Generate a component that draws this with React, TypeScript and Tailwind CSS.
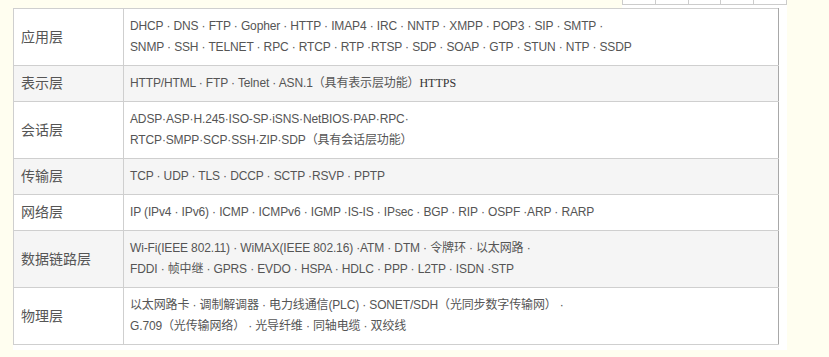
const rows: { label: string; lines: React.ReactNode[] }[] = [
  {
    label: "应用层",
    lines: [
      "DHCP · DNS · FTP · Gopher · HTTP · IMAP4 · IRC · NNTP · XMPP · POP3 · SIP · SMTP ·",
      "SNMP · SSH · TELNET · RPC · RTCP · RTP ·RTSP · SDP · SOAP · GTP · STUN · NTP · SSDP",
    ],
  },
  {
    label: "表示层",
    lines: [
      <>
        HTTP/HTML · FTP · Telnet · ASN.1（具有表示层功能）
        <span className="font-['Liberation_Serif','Noto_Sans_CJK_SC',serif] text-[#333] tracking-normal">HTTPS</span>
      </>,
    ],
  },
  {
    label: "会话层",
    lines: [
      "ADSP·ASP·H.245·ISO-SP·iSNS·NetBIOS·PAP·RPC·",
      "RTCP·SMPP·SCP·SSH·ZIP·SDP（具有会话层功能）",
    ],
  },
  {
    label: "传输层",
    lines: ["TCP · UDP · TLS · DCCP · SCTP ·RSVP · PPTP"],
  },
  {
    label: "网络层",
    lines: ["IP (IPv4 · IPv6) · ICMP · ICMPv6 · IGMP ·IS-IS · IPsec · BGP · RIP · OSPF ·ARP · RARP"],
  },
  {
    label: "数据链路层",
    lines: [
      "Wi-Fi(IEEE 802.11) · WiMAX(IEEE 802.16) ·ATM · DTM · 令牌环 · 以太网路 ·",
      "FDDI · 帧中继 · GPRS · EVDO · HSPA · HDLC · PPP · L2TP · ISDN ·STP",
    ],
  },
  {
    label: "物理层",
    lines: [
      "以太网路卡 · 调制解调器 · 电力线通信(PLC) · SONET/SDH（光同步数字传输网） ·",
      "G.709（光传输网络） · 光导纤维 · 同轴电缆 · 双绞线",
    ],
  },
];

export default function App() {
  return (
    <div className="w-[829px] h-[357px] overflow-hidden bg-[#fffef0] font-['Liberation_Sans','Noto_Sans_CJK_SC',sans-serif]">
      <div className="ml-[13px] w-[774px] flex flex-col">
        {/* bottom of the previous table */}
        <div className="h-[8px] flex justify-end">
          <div className="w-[165px] bg-white">
            <div className="h-[5px] flex border-l border-b border-[#ccc]">
              {[0, 1, 2, 3, 4].map(i => (
                <div key={i} className="flex-1 border-r border-[#ccc]" />
              ))}
            </div>
          </div>
        </div>

        <div className="flex">
          <table className="w-[766px] border-collapse bg-white">
            <tbody>
              {rows.map((row, i) => (
                <tr key={row.label} className={i % 2 === 1 ? "bg-[#f5f5f5]" : "bg-white"}>
                  <td className="w-[110px] border border-[#cfcfcf] px-[7px] pb-[2px] align-middle text-[14px] text-[#555] font-['Noto_Sans_CJK_SC',sans-serif]">
                    {row.label}
                  </td>
                  <td className="border border-[#cfcfcf] border-r-[#a8a8a8] pl-[6px] pr-[7px] py-[7px] text-[12px] leading-[21px] tracking-[-0.14px] text-[#555]">
                    {row.lines.map((line, j) => (
                      <div key={j} className="whitespace-nowrap">{line}</div>
                    ))}
                  </td>
                </tr>
              ))}
            </tbody>
          </table>
          <div className="w-[8px] bg-white" />
        </div>
        <div className="h-[5px] bg-white" />
      </div>
    </div>
  );
}
